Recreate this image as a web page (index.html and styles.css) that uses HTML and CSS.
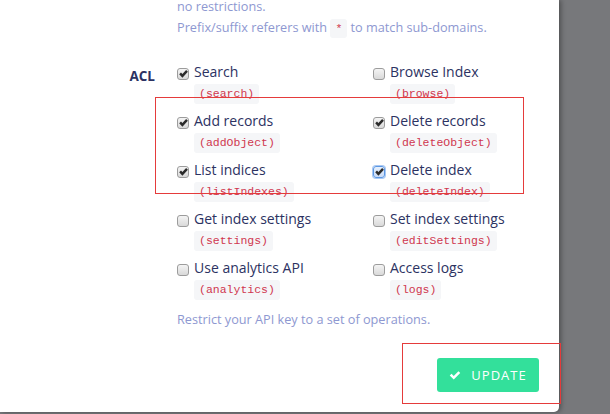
FILE: index.html
```html
<!DOCTYPE html>
<html>
<head>
<meta charset="utf-8">
<link rel="stylesheet" href="styles.css">
</head>
<body>
<div class="panel">
  <div class="help">
    <p>no restrictions.</p>
    <p>Prefix/suffix referers with <code class="chip-inline">*</code> to match sub-domains.</p>
  </div>
  <div class="field">
    <div class="field-label">ACL</div>
    <div class="field-body">
      <div class="acl-grid">
        <div class="opt"><span class="cb checked"></span><div class="opt-text"><div class="opt-label">Search</div><code class="chip">(search)</code></div></div>
        <div class="opt"><span class="cb"></span><div class="opt-text"><div class="opt-label">Browse Index</div><code class="chip">(browse)</code></div></div>
        <div class="opt"><span class="cb checked"></span><div class="opt-text"><div class="opt-label">Add records</div><code class="chip">(addObject)</code></div></div>
        <div class="opt"><span class="cb checked"></span><div class="opt-text"><div class="opt-label">Delete records</div><code class="chip">(deleteObject)</code></div></div>
        <div class="opt"><span class="cb checked"></span><div class="opt-text"><div class="opt-label">List indices</div><code class="chip">(listIndexes)</code></div></div>
        <div class="opt"><span class="cb checked focus"></span><div class="opt-text"><div class="opt-label">Delete index</div><code class="chip">(deleteIndex)</code></div></div>
        <div class="opt"><span class="cb"></span><div class="opt-text"><div class="opt-label">Get index settings</div><code class="chip">(settings)</code></div></div>
        <div class="opt"><span class="cb"></span><div class="opt-text"><div class="opt-label">Set index settings</div><code class="chip">(editSettings)</code></div></div>
        <div class="opt"><span class="cb"></span><div class="opt-text"><div class="opt-label">Use analytics API</div><code class="chip">(analytics)</code></div></div>
        <div class="opt"><span class="cb"></span><div class="opt-text"><div class="opt-label">Access logs</div><code class="chip">(logs)</code></div></div>
      </div>
      <p class="field-help">Restrict your API key to a set of operations.</p>
    </div>
  </div>
  <div class="actions">
    <button class="btn-update"><svg class="btn-icon" viewBox="0 0 16 16" width="12" height="12"><path d="M1 8.8 L3.4 6.4 L6.3 9.2 L12.6 2.9 L15 5.3 L6.3 14 Z" fill="#fff"/></svg>UPDATE</button>
  </div>
</div>
<div class="mark mark-acl"></div>
<div class="mark mark-btn"></div>
</body>
</html>
```
FILE: styles.css
```css
* { box-sizing: border-box; }
html, body { margin: 0; padding: 0; }
body {
  width: 610px;
  height: 414px;
  background: #77787b;
  font-family: "Open Sans", "Noto Sans", sans-serif;
  overflow: hidden;
  position: relative;
}
.panel {
  width: 559px;
  height: 412px;
  background: #fff;
  border-radius: 0 0 5px 0;
  box-shadow: 2px 0 5px rgba(0,0,0,0.35);
  overflow: hidden;
  display: flex;
  flex-direction: column;
}
.help {
  margin-top: -4px;
  margin-left: 177px;
  font-size: 12.7px;
  line-height: 21px;
  color: #8e98d1;
}
.help p { margin: 0; }
.chip-inline {
  font-family: "Liberation Mono", "DejaVu Sans Mono", monospace;
  font-size: 11.5px;
  color: #d0374f;
  background: #f5f6f8;
  padding: 3px 5px;
  border-radius: 3px;
}
.field {
  display: flex;
  margin-top: 23px;
}
.field-label {
  flex: none;
  width: 155px;
  text-align: right;
  padding-top: 4px;
  font-size: 13.5px;
  line-height: 20px;
  font-weight: 700;
  color: #2c3262;
}
.field-body {
  margin-left: 22px;
}
.acl-grid {
  display: grid;
  grid-template-columns: 196px 196px;
  row-gap: 7px;
}
.opt {
  display: flex;
  align-items: flex-start;
  gap: 5px;
}
.opt-text {
  display: flex;
  flex-direction: column;
  align-items: flex-start;
}
.opt-label {
  font-size: 14px;
  line-height: 20px;
  color: #2c3262;
  margin-bottom: 2px;
}
.chip {
  font-family: "Liberation Mono", "DejaVu Sans Mono", monospace;
  font-size: 11.5px;
  line-height: 20px;
  height: 20px;
  padding: 0 5px;
  color: #d0374f;
  background: #f5f6f8;
  border-radius: 3px;
}
.cb {
  width: 12px;
  height: 12px;
  margin-top: 6px;
  border: 1px solid #9c9c9c;
  border-radius: 3px;
  background: linear-gradient(#f4f4f4, #d9d9d9);
  flex: none;
  position: relative;
}
.cb.checked::after {
  content: "";
  position: absolute;
  left: 1px;
  top: 1px;
  width: 9px;
  height: 8px;
  background: url("data:image/svg+xml;utf8,<svg xmlns='http://www.w3.org/2000/svg' viewBox='0 0 9 8'><path d='M0.2 4.3 L2 2.6 L3.4 4 L7.1 0.1 L8.9 1.8 L3.4 7.7 Z' fill='%232b2b2b'/></svg>") no-repeat center / contain;
}
.cb.focus {
  border-color: #5b97e4;
  background: linear-gradient(#e6f0fd, #c9dbf6);
  box-shadow: 0 0 0 1px #a9c8f2;
}
.field-help {
  margin: 9px 0 0;
  font-size: 12.7px;
  line-height: 20px;
  color: #8e98d1;
}
.actions {
  display: flex;
  justify-content: flex-end;
  margin-top: 29px;
  padding-right: 20px;
}
.btn-update {
  width: 102px;
  height: 34px;
  border: none;
  border-radius: 3px;
  background: #33e09b;
  color: #fff;
  font-family: "Open Sans", "Noto Sans", sans-serif;
  font-size: 13px;
  letter-spacing: 1px;
  display: flex;
  align-items: center;
  justify-content: center;
  gap: 10px;
  padding: 0;
}
.btn-icon { display: block; }
.mark {
  position: absolute;
  border: 1px solid #e53b3b;
  pointer-events: none;
}
.mark-acl { left: 155px; top: 97px; width: 369px; height: 97px; }
.mark-btn { left: 402px; top: 343px; width: 159px; height: 61px; }
```
